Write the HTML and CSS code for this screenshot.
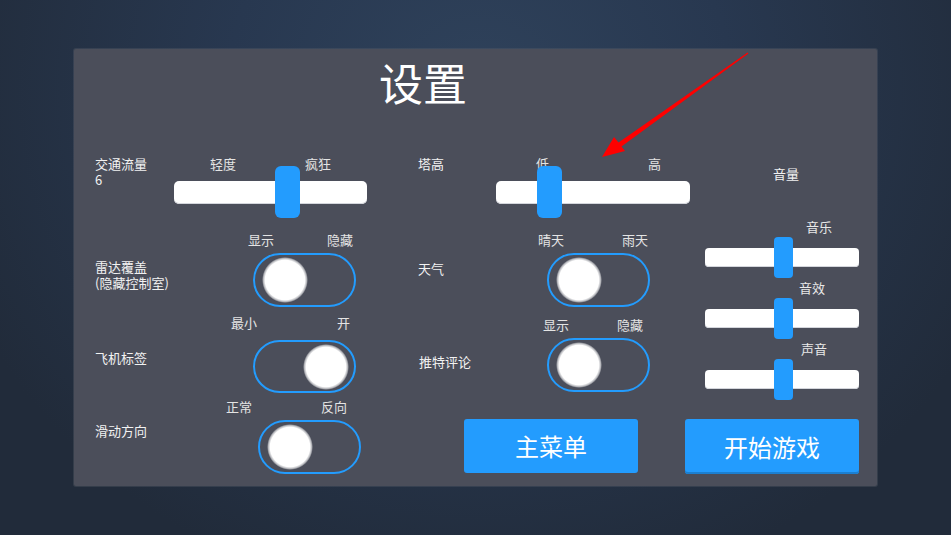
FILE: index.html
```html
<!DOCTYPE html>
<html lang="zh-CN">
<head>
<meta charset="utf-8">
<title>设置</title>
<link rel="stylesheet" href="styles.css">
</head>
<body>
<div class="page">
  <div class="panel">
    <h1 class="title">设置</h1>
    <div class="grid">
      <!-- row 1 -->
      <div class="label r1 col-l1"><span class="line">交通流量</span><span class="line">6</span></div>
      <div class="slider slider--traffic r1 col-c1">
        <div class="slider__labels"><span>轻度</span><span>疯狂</span></div>
        <div class="slider__track"><div class="slider__thumb" style="--v:0.6"></div></div>
      </div>
      <div class="label r1 col-l2">塔高</div>
      <div class="slider slider--tower r1 col-c2">
        <div class="slider__labels"><span>低</span><span>高</span></div>
        <div class="slider__track"><div class="slider__thumb" style="--v:0.24"></div></div>
      </div>

      <div class="volume">
        <div class="volume__title">音量</div>
        <div class="vslider vslider--first">
          <div class="vslider__label">音乐</div>
          <div class="vslider__track"><div class="vslider__thumb" style="--v:0.51"></div></div>
        </div>
        <div class="vslider">
          <div class="vslider__label vslider__label--fx">音效</div>
          <div class="vslider__track"><div class="vslider__thumb" style="--v:0.51"></div></div>
        </div>
        <div class="vslider">
          <div class="vslider__label vslider__label--voice">声音</div>
          <div class="vslider__track"><div class="vslider__thumb" style="--v:0.51"></div></div>
        </div>
      </div>

      <!-- row 2 -->
      <div class="label label--radar r2 col-l1"><span class="line">雷达覆盖</span><span class="line">(隐藏控制室)</span></div>
      <div class="tgroup tgroup--radar r2 col-c1">
        <div class="tgroup__labels"><span>显示</span><span>隐藏</span></div>
        <div class="toggle"><div class="toggle__knob"></div></div>
      </div>
      <div class="label label--weather r2 col-l2">天气</div>
      <div class="tgroup tgroup--weather r2 col-c2">
        <div class="tgroup__labels"><span>晴天</span><span>雨天</span></div>
        <div class="toggle"><div class="toggle__knob"></div></div>
      </div>

      <!-- row 3 -->
      <div class="label label--plane r3 col-l1">飞机标签</div>
      <div class="tgroup tgroup--plane r3 col-c1">
        <div class="tgroup__labels"><span>最小</span><span>开</span></div>
        <div class="toggle toggle--on"><div class="toggle__knob"></div></div>
      </div>
      <div class="label label--tweet r3 col-l2">推特评论</div>
      <div class="tgroup tgroup--tweet r3 col-c2">
        <div class="tgroup__labels"><span>显示</span><span>隐藏</span></div>
        <div class="toggle"><div class="toggle__knob"></div></div>
      </div>

      <!-- row 4 -->
      <div class="label label--slide r4 col-l1">滑动方向</div>
      <div class="tgroup tgroup--slide r4 col-c1">
        <div class="tgroup__labels"><span>正常</span><span>反向</span></div>
        <div class="toggle"><div class="toggle__knob"></div></div>
      </div>
      <div class="buttons">
        <button class="btn">主菜单</button>
        <button class="btn btn--start">开始游戏</button>
      </div>
    </div>
  </div>
  <svg class="arrow" width="951" height="535" viewBox="0 0 951 535">
    <polygon fill="#ff0000" points="602,157 625,151 621.5,146.5 748.4,53.4 747.6,52.6 618.5,142.5 614,137"/>
  </svg>
</div>
</body>
</html>
```

FILE: styles.css
```css
* { box-sizing: border-box; }

html, body {
  margin: 0;
  padding: 0;
}

body {
  width: 951px;
  height: 535px;
  overflow: hidden;
  font-family: "Noto Sans CJK SC", "Noto Sans", sans-serif;
  background: radial-gradient(ellipse 560px 520px at 480px 90px, #2f425b 0%, #283850 45%, #212b3a 100%);
  color: #efefef;
}

.page {
  position: relative;
  width: 951px;
  height: 535px;
  padding: 49px 74px 0 74px;
}

.panel {
  width: 803px;
  height: 437px;
  background: #4b4e5a;
  border-radius: 2px;
  padding: 0 18px 0 21px;
  box-shadow: 0 0 0 1px rgba(90, 94, 106, 0.35);
}

.title {
  margin: 0;
  padding: 7px 0 0 284px;
  height: 107px;
  font-size: 44px;
  line-height: 52px;
  font-weight: 400;
  color: #ffffff;
}

.grid {
  display: grid;
  grid-template-columns: 79px 193px 51px 78px 194px 15px 154px;
  grid-template-rows: 76px 83px 84px 76px;
}

.r1 { grid-row: 1; }
.r2 { grid-row: 2; }
.r3 { grid-row: 3; }
.r4 { grid-row: 4; }
.col-l1 { grid-column: 1; }
.col-c1 { grid-column: 2; }
.col-l2 { grid-column: 4; }
.col-c2 { grid-column: 5; }

.label {
  font-size: 13px;
  line-height: 16px;
  color: #f2f2f2;
  white-space: nowrap;
}

.line {
  display: block;
  height: 16px;
}

.label--radar { margin-top: 27px; }
.label--weather { margin-top: 29px; }
.label--plane { margin-top: 35px; }
.label--tweet { margin-top: 39px; margin-left: 1px; }
.label--slide { margin-top: 24px; }

/* main sliders */
.slider__labels {
  display: flex;
  justify-content: space-between;
  font-size: 13px;
  line-height: 16px;
  color: #e4e4e4;
}

.slider--traffic .slider__labels { padding: 0 36px; }
.slider--tower .slider__labels { padding: 0 29px 0 40px; }

.slider__track {
  position: relative;
  margin-top: 9px;
  height: 23px;
  background: #ffffff;
  border-radius: 5px;
  box-shadow: inset 0 -1px 0 #d4d6dc;
}

.slider__thumb {
  position: absolute;
  top: -15px;
  left: calc(var(--v) * (100% - 25px));
  width: 25px;
  height: 52px;
  background: #239cfe;
  border-radius: 6px;
}

/* volume column */
.volume {
  grid-column: 7;
  grid-row: 1 / 4;
  padding-top: 10px;
}

.volume__title {
  font-size: 13px;
  line-height: 16px;
  padding-left: 68px;
  color: #f2f2f2;
}

.vslider { margin-top: 13px; }
.vslider--first { margin-top: 37px; }

.vslider__label {
  font-size: 13px;
  line-height: 16px;
  padding-left: 101px;
  color: #e8e8e8;
}
.vslider__label--fx { padding-left: 94px; }
.vslider__label--voice { padding-left: 96px; }

.vslider__track {
  position: relative;
  margin-top: 13px;
  height: 19px;
  background: #ffffff;
  border-radius: 4px;
  box-shadow: inset 0 -1px 0 #d4d6dc;
}

.vslider__thumb {
  position: absolute;
  top: -11px;
  left: calc(var(--v) * (100% - 19px));
  width: 19px;
  height: 41px;
  background: #239cfe;
  border-radius: 4px;
}

/* toggles */
.tgroup {
  display: flex;
  flex-direction: column;
  align-items: flex-start;
}

.tgroup__labels {
  display: flex;
  justify-content: space-between;
  font-size: 13px;
  line-height: 16px;
  color: #e4e4e4;
}

.toggle {
  display: flex;
  align-items: center;
  justify-content: flex-start;
  width: 103px;
  height: 54px;
  margin-top: 5px;
  border: 2px solid #239cfe;
  border-radius: 27px;
  padding: 0 5px 0 7px;
}

.toggle--on { justify-content: flex-end; }

.toggle__knob {
  width: 46px;
  height: 46px;
  border-radius: 50%;
  background: radial-gradient(circle closest-side, #ffffff 0%, #ffffff 86%, rgba(255, 255, 255, 0.6) 94%, rgba(255, 255, 255, 0) 100%);
}

.tgroup--radar .tgroup__labels { margin-left: 74px; width: 105px; }
.tgroup--radar .toggle { margin-left: 79px; }

.tgroup--weather .tgroup__labels { margin-left: 42px; width: 110px; }
.tgroup--weather .toggle { margin-left: 51px; }

.tgroup--plane .tgroup__labels { margin-left: 57px; width: 119px; }
.tgroup--plane .toggle { margin-left: 79px; margin-top: 9px; height: 53px; }

.tgroup--tweet .tgroup__labels { margin-left: 47px; width: 100px; margin-top: 2px; }
.tgroup--tweet .toggle { margin-left: 51px; }

.tgroup--slide .tgroup__labels { margin-left: 52px; width: 121px; }
.tgroup--slide .toggle { margin-left: 84px; }

/* buttons */
.buttons {
  grid-column: 4 / 8;
  grid-row: 4;
  display: flex;
  gap: 47px;
  padding-left: 46px;
  padding-top: 20px;
}

.btn {
  width: 174px;
  height: 54px;
  border: none;
  border-radius: 3px;
  background: #239cfe;
  color: #ffffff;
  font-family: "Noto Sans CJK SC", "Noto Sans", sans-serif;
  font-size: 24px;
  line-height: 30px;
  padding: 0;
}

.btn--start {
  height: 55px;
  box-shadow: inset 0 -2px 0 #1c7fd0;
}

.arrow {
  position: absolute;
  left: 0;
  top: 0;
  pointer-events: none;
}
```
